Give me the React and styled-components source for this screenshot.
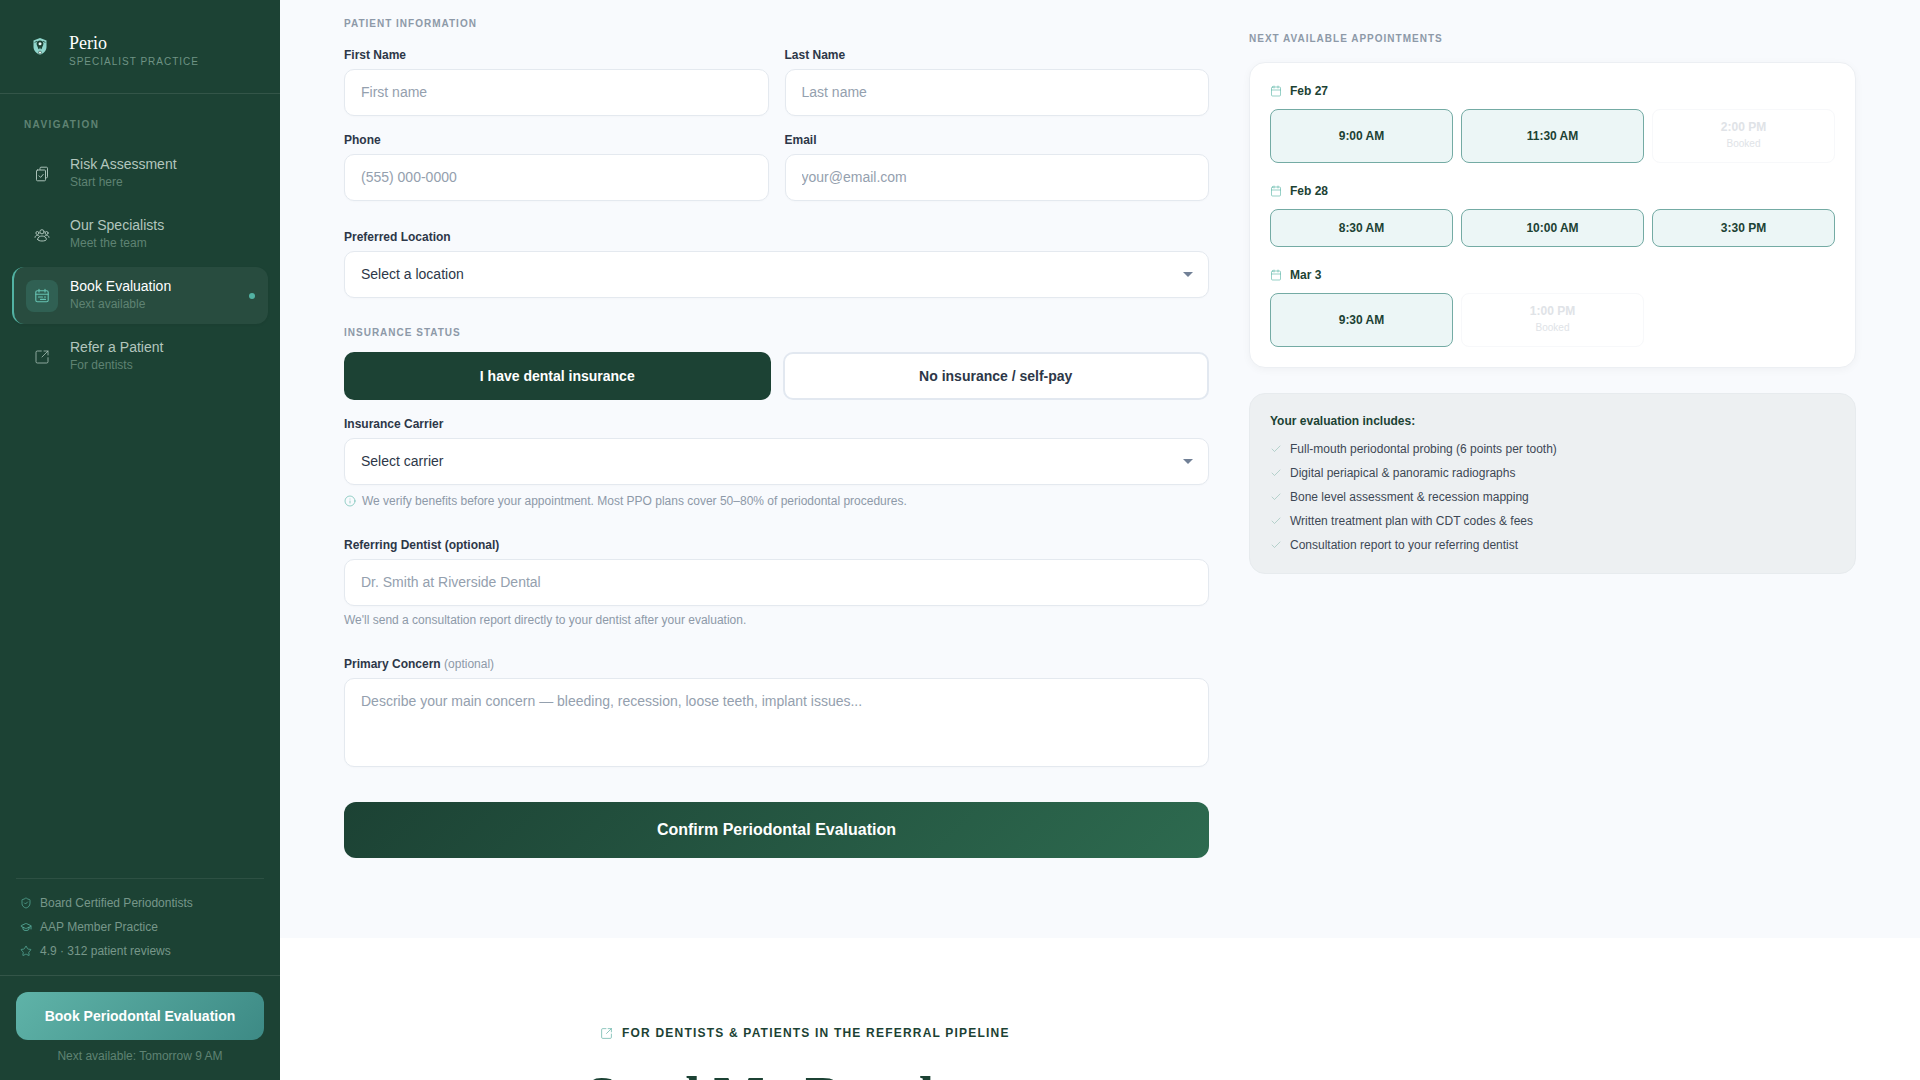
import React from 'react';
import styled, { createGlobalStyle } from 'styled-components';
import { ShieldCheck, GraduationCap, Star, Calendar, Check, Info, SquareArrowOutUpRight } from 'lucide-react';

const Global = createGlobalStyle`
  html, body { margin: 0; height: 100%; overflow: hidden; background: #f8fafc; }
  * { box-sizing: border-box; }
  body, input, select, textarea, button { font-family: "Liberation Sans", Arial, sans-serif; }
`;

const Page = styled.div`
  display: flex;
  height: 100vh;
  overflow: hidden;
`;

const Sidebar = styled.aside`
  width: 280px;
  flex: none;
  background: #1c4234;
  display: flex;
  flex-direction: column;
`;

const Brand = styled.div`
  height: 94px;
  padding: 0 0 0 32px;
  display: flex;
  align-items: center;
  gap: 21px;
  border-bottom: 1px solid rgba(255, 255, 255, 0.1);
`;

const BrandName = styled.div`
  font-family: "Liberation Serif", serif;
  font-size: 18px;
  line-height: 22px;
  color: #fff;
  margin-top: 6px;
`;

const BrandSub = styled.div`
  font-size: 10px;
  line-height: 13px;
  letter-spacing: 1px;
  color: #6f9384;
  margin-top: 1px;
`;

const NavLabel = styled.div`
  font-size: 10px;
  font-weight: 700;
  letter-spacing: 1.4px;
  line-height: 14px;
  color: #5f8373;
  padding: 24px 0 0 24px;
  margin-bottom: 13px;
`;

const NavList = styled.nav`
  display: flex;
  flex-direction: column;
  gap: 4px;
  padding: 0 12px;
`;

const NavItem = styled.div`
  height: 57px;
  display: flex;
  align-items: center;
  gap: 12px;
  padding: 0 14px 0 12px;
  border-radius: 12px;
  border-left: 2px solid ${p => (p.$active ? '#52b2a3' : 'transparent')};
  background: ${p => (p.$active ? 'rgba(255,255,255,0.055)' : 'transparent')};
  box-shadow: ${p => (p.$active ? '0 1px 3px rgba(0,0,0,0.06)' : 'none')};
`;

const NavIcon = styled.div`
  width: 32px;
  height: 32px;
  flex: none;
  border-radius: 8px;
  display: flex;
  align-items: center;
  justify-content: center;
  background: ${p => (p.$active ? 'rgba(82,178,163,0.2)' : 'transparent')};
  color: ${p => (p.$active ? '#66c2b3' : '#a9c1b7')};
`;

const NavText = styled.div`
  flex: 1;
  min-width: 0;
  margin-top: -1px;
`;

const NavTitle = styled.div`
  font-size: 14px;
  line-height: 17px;
  color: ${p => (p.$active ? '#fff' : '#b3c6be')};
`;

const NavSub = styled.div`
  font-size: 12px;
  line-height: 15px;
  margin-top: 2px;
  color: #5f8373;
`;

const Dot = styled.span`
  width: 6px;
  height: 6px;
  border-radius: 50%;
  background: #52b2a3;
  margin-right: -1px;
`;

const Spacer = styled.div`
  flex: 1;
`;

const Trust = styled.div`
  margin: 0 16px;
  padding: 14px 0 14px;
  border-top: 1px solid rgba(255, 255, 255, 0.08);
  display: flex;
  flex-direction: column;
  gap: 4px;
`;

const TrustRow = styled.div`
  height: 20px;
  display: flex;
  align-items: center;
  gap: 8px;
  padding-left: 4px;
  font-size: 12px;
  color: #77978a;
  svg { color: #5bb3a2; flex: none; }
`;

const SideFoot = styled.div`
  border-top: 1px solid rgba(255, 255, 255, 0.1);
  padding: 16px;
  height: 105px;
`;

const SideCta = styled.button`
  width: 100%;
  height: 48px;
  border: none;
  border-radius: 12px;
  background: linear-gradient(135deg, #5fb3a8, #3d8a85);
  color: #fff;
  font-size: 14px;
  font-weight: 700;
`;

const NextAvail = styled.div`
  margin-top: 9px;
  text-align: center;
  font-size: 12px;
  line-height: 14px;
  color: #5f8373;
`;

const Main = styled.main`
  flex: 1;
  min-width: 0;
  background: #f8fafd;
  display: flex;
  flex-direction: column;
`;

const Columns = styled.div`
  display: grid;
  grid-template-columns: 865fr 607fr;
  gap: 40px;
  padding: 17px 64px 80px;
  background: #f8fafd;
`;

const SectionTitle = styled.div`
  font-size: 10px;
  font-weight: 700;
  letter-spacing: 1px;
  line-height: 14px;
  color: #8d99a8;
  text-transform: uppercase;
  margin-bottom: ${p => p.$mb || 0}px;
`;

const Grid2 = styled.div`
  display: grid;
  grid-template-columns: 1fr 1fr;
  column-gap: 16px;
  row-gap: 17px;
  margin-bottom: 29px;
`;

const Field = styled.div`
  margin-bottom: ${p => p.$mb || 0}px;
`;

const Label = styled.label`
  display: block;
  font-size: 12px;
  font-weight: 700;
  line-height: 14px;
  color: #2d3748;
  margin-bottom: 7px;
  span { font-weight: 400; color: #8d99a8; }
`;

const inputCss = `
  width: 100%;
  height: 47px;
  padding: 0 16px 2px;
  background: #fff;
  border: 1px solid #e4e9ef;
  border-radius: 10px;
  font-size: 14px;
  outline: none;
  color: #2d3748;
  box-shadow: 0 1px 2px rgba(0,0,0,0.02);
  display: block;
  &::placeholder { color: #94a0ae; opacity: 1; }
`;

const Input = styled.input`${inputCss}`;

const Textarea = styled.textarea`
  ${inputCss}
  height: 89px;
  padding: 12px 16px;
  line-height: 20px;
  resize: none;
`;

const SelectWrap = styled.div`
  position: relative;
  &::after {
    content: '';
    position: absolute;
    right: 16px;
    top: 21px;
    border-left: 5px solid transparent;
    border-right: 5px solid transparent;
    border-top: 5px solid #718096;
    pointer-events: none;
  }
`;

const Select = styled.select`
  ${inputCss}
  appearance: none;
`;

const Toggle = styled.div`
  display: grid;
  grid-template-columns: 1fr 1fr;
  gap: 12px;
  margin-bottom: 17px;
`;

const ToggleBtn = styled.button`
  height: 48px;
  border-radius: 10px;
  font-size: 14px;
  font-weight: 700;
  background: ${p => (p.$on ? '#1c4234' : '#fff')};
  color: ${p => (p.$on ? '#fff' : '#2d3748')};
  border: ${p => (p.$on ? 'none' : '2px solid #e2e8f0')};
`;

const HintRow = styled.div`
  display: flex;
  align-items: center;
  gap: 6px;
  margin-top: 9px;
  font-size: 12px;
  line-height: 14px;
  color: #8d99a8;
  margin-bottom: 30px;
  svg { color: #52b2a3; flex: none; }
`;

const Hint = styled.div`
  margin-top: 7px;
  font-size: 12px;
  line-height: 14px;
  color: #8d99a8;
  margin-bottom: 30px;
`;

const Confirm = styled.button`
  display: block;
  width: 100%;
  height: 56px;
  margin-top: 35px;
  border: none;
  border-radius: 12px;
  background: linear-gradient(135deg, #1c4234, #2d6a4f);
  color: #fff;
  font-size: 16px;
  font-weight: 700;
`;

const Aside = styled.div`
  padding-top: 15px;
`;

const Card = styled.div`
  background: #fff;
  border: 1px solid #eceff3;
  border-radius: 16px;
  padding: 20px;
  box-shadow: 0 2px 8px rgba(0, 0, 0, 0.04);
  margin-bottom: 25px;
`;

const DateHead = styled.div`
  display: flex;
  align-items: center;
  gap: 8px;
  height: 16px;
  margin-bottom: 10px;
  font-size: 12px;
  font-weight: 700;
  color: #1c4234;
  svg { color: #52b2a3; flex: none; }
`;

const SlotGrid = styled.div`
  display: grid;
  grid-template-columns: repeat(3, 1fr);
  gap: 8px;
  margin-bottom: ${p => (p.$last ? 0 : 20)}px;
`;

const Slot = styled.div`
  height: ${p => (p.$tall ? 54 : 38)}px;
  display: flex;
  flex-direction: column;
  align-items: center;
  justify-content: center;
  border-radius: 8px;
  border: 1px solid ${p => (p.$off ? '#f7f8fa' : '#74aba4')};
  background: ${p => (p.$off ? '#fff' : '#ecf6f6')};
  color: ${p => (p.$off ? '#e0e3e7' : '#1c4234')};
  padding-bottom: ${p => (p.$off ? 2 : 0)}px;
  font-size: 12px;
  font-weight: 700;
  line-height: 14px;
  small {
    font-size: 10px;
    font-weight: 400;
    line-height: 12px;
    margin-top: 4px;
  }
`;

const Includes = styled.div`
  background: #edf0f2;
  border: 1px solid #e7ebee;
  border-radius: 16px;
  padding: 20px 20px 16px;
`;

const IncludesTitle = styled.div`
  font-size: 12px;
  font-weight: 700;
  line-height: 14px;
  color: #1c4234;
  margin-bottom: 9px;
`;

const IncludeRow = styled.div`
  height: 24px;
  display: flex;
  align-items: center;
  gap: 8px;
  font-size: 12px;
  color: #3d4855;
  svg { color: #8fbcb1; flex: none; }
`;

const Referral = styled.section`
  flex: 1;
  background: #fff;
  padding: 87px 320px 0;
`;

const Eyebrow = styled.div`
  display: flex;
  align-items: center;
  gap: 9px;
  height: 16px;
  font-size: 12px;
  font-weight: 700;
  letter-spacing: 1.2px;
  color: #1c4234;
  svg { color: #52a89c; flex: none; }
`;

const Heading = styled.h2`
  margin: 23px 0 0 -14px;
  font-family: "Liberation Serif", serif;
  font-size: 54px;
  font-weight: 700;
  line-height: 64px;
  color: #1c4234;
`;

const LogoIcon = () => (
  <svg width="16" height="20" viewBox="0 0 16 20" fill="none">
    <path d="M8 1l6.5 2.4v6.4c0 4-2.9 6.6-6.5 8-3.6-1.4-6.5-4-6.5-8V3.4z" fill="#8fd6cc" />
    <path d="M8 3.4c-2 0-3.4 1.2-3.4 3.2 0 2.2 1.2 3 1.6 5 .2 1 1 1 1.3.1.2-.8.4-1.2.5-1.2s.3.4.5 1.2c.3.9 1.1.9 1.3-.1.4-2 1.6-2.8 1.6-5 0-2-1.4-3.2-3.4-3.2z" fill="#1c4234" />
    <path d="M2.6 5.5L5 4.2M13.4 5.5L11 4.2" stroke="#1c4234" strokeWidth="0.8" />
    <circle cx="8" cy="15.6" r="1.5" fill="#eaf8f5" stroke="#1c4234" strokeWidth="0.6" />
    <circle cx="8" cy="6.8" r="1.5" fill="#eaf8f5" />
  </svg>
);

const RiskIcon = () => (
  <svg width="16" height="16" viewBox="0 0 16 16" fill="none" stroke="currentColor" strokeWidth="1" strokeLinecap="round" strokeLinejoin="round">
    <path d="M6 3.5V2.2c0-.6.4-1 1-1h5.5c.6 0 1 .4 1 1v8.6c0 .6-.4 1-1 1H11.5" />
    <rect x="2.5" y="4" width="9" height="10.8" rx="1" />
    <path d="M5 9.8l1.6 1.6 2.6-3" />
  </svg>
);

const TeamIcon = () => (
  <svg width="16" height="16" viewBox="0 0 16 16" fill="none" stroke="currentColor" strokeWidth="1" strokeLinecap="round" strokeLinejoin="round">
    <circle cx="8" cy="4.8" r="2.1" />
    <circle cx="3.4" cy="6" r="1.5" />
    <circle cx="12.6" cy="6" r="1.5" />
    <path d="M1 10.4c0-1.3 1-2 2.4-2 .7 0 1.3.2 1.7.5M15 10.4c0-1.3-1-2-2.4-2-.7 0-1.3.2-1.7.5" />
    <path d="M3.6 12.4c0-2 2-3.4 4.4-3.4s4.4 1.4 4.4 3.4c0 1-2 1.6-4.4 1.6s-4.4-.6-4.4-1.6z" />
  </svg>
);

const BookIcon = () => (
  <svg width="16" height="16" viewBox="0 0 16 16" fill="none" stroke="currentColor" strokeWidth="1.1" strokeLinecap="round" strokeLinejoin="round">
    <rect x="1.8" y="2.8" width="12.4" height="11" rx="1.5" />
    <path d="M1.8 6.3h12.4M5 1.3v2.8M11 1.3v2.8M4.5 9h4M6.5 11.4h5M10.5 9h1" />
  </svg>
);

const slotDays = [
  { day: 'Feb 27', tall: true, slots: [['9:00 AM'], ['11:30 AM'], ['2:00 PM', true]] },
  { day: 'Feb 28', tall: false, slots: [['8:30 AM'], ['10:00 AM'], ['3:30 PM']] },
  { day: 'Mar 3', tall: true, slots: [['9:30 AM'], ['1:00 PM', true]] },
];

const includes = [
  'Full-mouth periodontal probing (6 points per tooth)',
  'Digital periapical & panoramic radiographs',
  'Bone level assessment & recession mapping',
  'Written treatment plan with CDT codes & fees',
  'Consultation report to your referring dentist',
];

const navItems = [
  { title: 'Risk Assessment', sub: 'Start here', icon: <RiskIcon /> },
  { title: 'Our Specialists', sub: 'Meet the team', icon: <TeamIcon /> },
  { title: 'Book Evaluation', sub: 'Next available', icon: <BookIcon />, active: true },
  { title: 'Refer a Patient', sub: 'For dentists', icon: <SquareArrowOutUpRight size={16} strokeWidth={1.2} /> },
];

export default function App() {
  return (
    <Page>
      <Global />
      <Sidebar>
        <Brand>
          <LogoIcon />
          <div>
            <BrandName>Perio</BrandName>
            <BrandSub>SPECIALIST PRACTICE</BrandSub>
          </div>
        </Brand>
        <NavLabel>NAVIGATION</NavLabel>
        <NavList>
          {navItems.map(n => (
            <NavItem key={n.title} $active={n.active}>
              <NavIcon $active={n.active}>{n.icon}</NavIcon>
              <NavText>
                <NavTitle $active={n.active}>{n.title}</NavTitle>
                <NavSub>{n.sub}</NavSub>
              </NavText>
              {n.active && <Dot />}
            </NavItem>
          ))}
        </NavList>
        <Spacer />
        <Trust>
          <TrustRow><ShieldCheck size={12} strokeWidth={1.4} />Board Certified Periodontists</TrustRow>
          <TrustRow><GraduationCap size={12} strokeWidth={1.6} />AAP Member Practice</TrustRow>
          <TrustRow><Star size={12} strokeWidth={1.4} />4.9 · 312 patient reviews</TrustRow>
        </Trust>
        <SideFoot>
          <SideCta>Book Periodontal Evaluation</SideCta>
          <NextAvail>Next available: Tomorrow 9 AM</NextAvail>
        </SideFoot>
      </Sidebar>
      <Main>
        <Columns>
          <div>
            <SectionTitle $mb={17}>Patient Information</SectionTitle>
            <Grid2>
              <div><Label>First Name</Label><Input placeholder="First name" /></div>
              <div><Label>Last Name</Label><Input placeholder="Last name" /></div>
              <div><Label>Phone</Label><Input placeholder="(555) 000-0000" /></div>
              <div><Label>Email</Label><Input placeholder="your@email.com" /></div>
            </Grid2>
            <Field $mb={28}>
              <Label>Preferred Location</Label>
              <SelectWrap>
                <Select defaultValue="a"><option value="a">Select a location</option></Select>
              </SelectWrap>
            </Field>
            <SectionTitle $mb={12}>Insurance Status</SectionTitle>
            <Toggle>
              <ToggleBtn $on>I have dental insurance</ToggleBtn>
              <ToggleBtn>No insurance / self-pay</ToggleBtn>
            </Toggle>
            <Label>Insurance Carrier</Label>
            <SelectWrap>
              <Select defaultValue="a"><option value="a">Select carrier</option></Select>
            </SelectWrap>
            <HintRow>
              <Info size={12} strokeWidth={1.2} />
              We verify benefits before your appointment. Most PPO plans cover 50–80% of periodontal procedures.
            </HintRow>
            <Label>Referring Dentist (optional)</Label>
            <Input placeholder="Dr. Smith at Riverside Dental" />
            <Hint>We'll send a consultation report directly to your dentist after your evaluation.</Hint>
            <Label>Primary Concern <span>(optional)</span></Label>
            <Textarea placeholder="Describe your main concern — bleeding, recession, loose teeth, implant issues..." />
            <Confirm>Confirm Periodontal Evaluation</Confirm>
          </div>
          <Aside>
            <SectionTitle $mb={16}>Next Available Appointments</SectionTitle>
            <Card>
              {slotDays.map((d, i) => (
                <div key={d.day}>
                  <DateHead><Calendar size={12} strokeWidth={1.2} />{d.day}</DateHead>
                  <SlotGrid $last={i === slotDays.length - 1}>
                    {d.slots.map(([t, off]) => (
                      <Slot key={t} $tall={d.tall} $off={off}>
                        {t}
                        {off && <small>Booked</small>}
                      </Slot>
                    ))}
                  </SlotGrid>
                </div>
              ))}
            </Card>
            <Includes>
              <IncludesTitle>Your evaluation includes:</IncludesTitle>
              {includes.map(t => (
                <IncludeRow key={t}><Check size={12} strokeWidth={1.2} />{t}</IncludeRow>
              ))}
            </Includes>
          </Aside>
        </Columns>
        <Referral>
          <Eyebrow>
            <SquareArrowOutUpRight size={13} strokeWidth={1.2} />
            FOR DENTISTS &amp; PATIENTS IN THE REFERRAL PIPELINE
          </Eyebrow>
          <Heading>Send My Results</Heading>
        </Referral>
      </Main>
    </Page>
  );
}
